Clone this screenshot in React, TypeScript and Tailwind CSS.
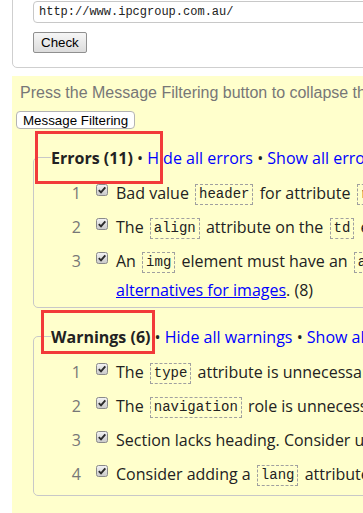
import type { ReactNode } from 'react';

const sans = "font-['Open_Sans',sans-serif]";

function Code({ children }: { children: ReactNode }) {
  return (
    <code className="mx-[2px] inline-block border border-dashed border-[#a0a0a0] px-[3px] py-px align-middle font-['Liberation_Mono',monospace] text-[14px] leading-[17px] text-[#222]">
      {children}
    </code>
  );
}

function Tick() {
  return (
    <svg className="mt-[5px] ml-[15px] shrink-0" width="12" height="12" viewBox="0 0 12 12">
      <defs>
        <linearGradient id="cb" x1="0" y1="0" x2="0" y2="1">
          <stop offset="0" stopColor="#f4f4f4" />
          <stop offset="1" stopColor="#c9c9c9" />
        </linearGradient>
      </defs>
      <rect x="0.5" y="0.5" width="11" height="11" rx="2" fill="url(#cb)" stroke="#8a8a8a" />
      <path d="M2.8 6.2 L5 8.4 L9.3 3.4" fill="none" stroke="#2b2b2b" strokeWidth="1.9" />
    </svg>
  );
}

function Row({ n, children }: { n: number; children: ReactNode }) {
  return (
    <li className="flex items-start">
      <span className="w-[47px] shrink-0 text-right text-[#777]">{n}</span>
      <Tick />
      <div className="ml-[8px] whitespace-nowrap text-[#222]">{children}</div>
    </li>
  );
}

function Group({
  title,
  noun,
  pb,
  children,
}: {
  title: string;
  noun: string;
  pb: string;
  children: ReactNode;
}) {
  return (
    <fieldset className={`rounded-[5px] border border-[#c8c8c8] ${pb}`}>
      <legend className="ml-[17px] whitespace-nowrap leading-[22px]">
        <b className="font-bold text-[#222]">{title}</b>
        <span className="text-[#222]"> • </span>
        <a className="text-[#0000ff]">Hide all {noun}</a>
        <span className="text-[#222]"> • </span>
        <a className="text-[#0000ff]">Show all {noun}</a>
      </legend>
      <ul className="flex flex-col gap-[5px] pt-[10px] leading-[29px]">{children}</ul>
    </fieldset>
  );
}

export default function App() {
  return (
    <div className={`relative h-[513px] w-[363px] overflow-hidden bg-white ${sans} text-[16px]`}>
      <div className="w-[1100px]">
        {/* URL form box, top edge scrolled off */}
        <div className="-mt-[12px] ml-[12px] rounded-[5px] border border-[#cfcfcf] pt-[12px] pb-[14px] pl-[20px]">
          <div className="h-[22px] w-[600px] rounded-[4px] border border-[#c8c8c8] bg-white pl-[5px] font-['Liberation_Mono',monospace] text-[12px] leading-[20px] text-[#222]">
            http://www.ipcgroup.com.au/
          </div>
          <button className="mt-[9px] h-[21px] rounded-[2px] border border-[#8f8f8f] bg-gradient-to-b from-[#f6f6f6] to-[#dcdcdc] px-[7px] font-['Liberation_Sans',Arial,sans-serif] text-[13.33px] leading-[15px] text-black">
            Check
          </button>
        </div>

        {/* Results panel */}
        <div className="mt-[8px] ml-[12px] bg-[#ffffcc] pt-[7px] pb-[40px] pl-[4px]">
          <p className="ml-[4px] font-['Liberation_Sans',Arial,sans-serif] text-[16px] leading-[19px] text-[#777]">
            Press the Message Filtering button to collapse the filtering options and error/warning/info counts.
          </p>
          <button className="mt-[9px] h-[18px] rounded-[4px] border border-[#b4b4b4] bg-white px-[6px] font-['Liberation_Sans',Arial,sans-serif] text-[13.33px] leading-[15px] text-black">
            Message Filtering
          </button>

          <div className="mt-[16px] ml-[17px] flex flex-col gap-[18px]">
            <Group title="Errors (11)" noun="errors" pb="pb-[2px]">
              <Row n={1}>
                Bad value <Code>header</Code> for attribute <Code>role</Code> on element <Code>header</Code>.
              </Row>
              <Row n={2}>
                The <Code>align</Code> attribute on the <Code>td</Code> element is obsolete. Use CSS instead.
              </Row>
              <Row n={3}>
                An <Code>img</Code> element must have an <Code>alt</Code> attribute, except under certain
                conditions. For details, consult guidance on providing text
                <br />
                <a className="text-[#0000ff] underline">alternatives for images</a>. (8)
              </Row>
            </Group>

            <Group title="Warnings (6)" noun="warnings" pb="pb-[6px]">
              <Row n={1}>
                The <Code>type</Code> attribute is unnecessary for JavaScript resources.
              </Row>
              <Row n={2}>
                The <Code>navigation</Code> role is unnecessary for element <Code>nav</Code>.
              </Row>
              <Row n={3}>
                Section lacks heading. Consider using <Code>h2</Code>-<Code>h6</Code> elements to add identifying
                headings to all sections.
              </Row>
              <Row n={4}>
                Consider adding a <Code>lang</Code> attribute to the <Code>html</Code> start tag to declare the
                language of this document.
              </Row>
            </Group>
          </div>
        </div>
      </div>

      {/* Red highlight boxes */}
      <div className="absolute top-[131px] left-[35px] h-[53px] w-[128px] border-[3px] border-[#f23a3a]" />
      <div className="absolute top-[310px] left-[41px] h-[44px] w-[114px] border-[3px] border-[#f23a3a]" />
    </div>
  );
}
